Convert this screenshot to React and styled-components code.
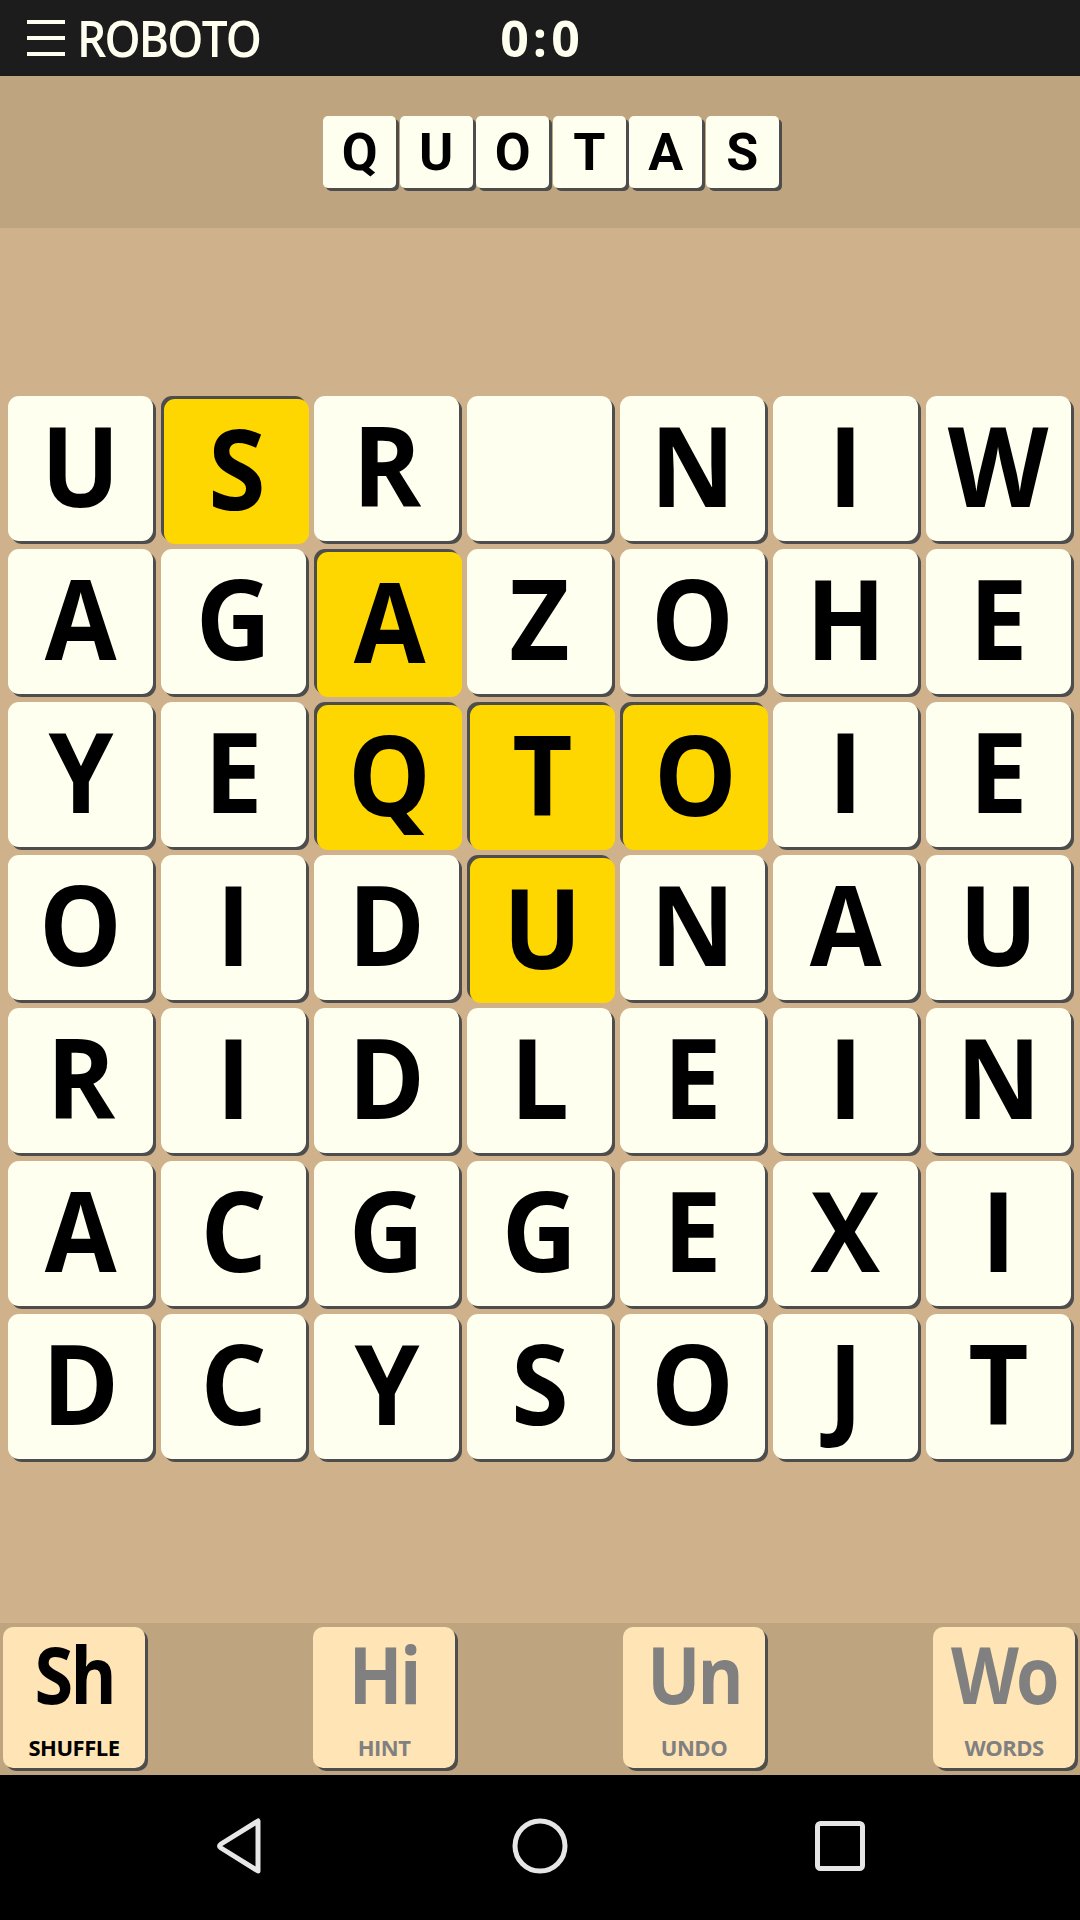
import React from "react";
import styled, { createGlobalStyle } from "styled-components";

const Global = createGlobalStyle`
  html, body { margin: 0; padding: 0; }
  body { width: 1080px; height: 1920px; overflow: hidden; font-family: "Open Sans", "DejaVu Sans", sans-serif; }
  #root { height: 1920px; }
`;

const Screen = styled.div`
  width: 1080px;
  height: 1920px;
  display: flex;
  flex-direction: column;
  background: #cfb28b;
`;

const TopBar = styled.div`
  height: 76px;
  background: #1c1c1c;
  display: grid;
  grid-template-columns: 1fr auto 1fr;
  align-items: center;
  color: #fffff0;
`;

const Brand = styled.div`
  display: flex;
  align-items: center;
  gap: 12px;
  padding-left: 27px;
`;

const Burger = styled.div`
  width: 38px;
  height: 36px;
  display: flex;
  flex-direction: column;
  justify-content: space-between;
  span {
    display: block;
    height: 4px;
    background: #fffff0;
  }
`;

const BrandText = styled.div`
  font-family: "Open Sans", sans-serif;
  font-weight: 600;
  font-size: 51px;
  letter-spacing: -2px;
  line-height: 1;
  transform: translateY(-1px) scaleX(0.9);
  transform-origin: left center;
`;

const Score = styled.div`
  font-family: "Open Sans", sans-serif;
  font-weight: 700;
  font-size: 50px;
  letter-spacing: 4px;
  line-height: 1;
  padding-left: 4px;
`;

const WordBar = styled.div`
  height: 152px;
  background: #bfa480;
  display: flex;
  align-items: center;
  justify-content: center;
  padding-left: 22px;
  gap: 3.5px;
  box-sizing: border-box;
`;

const WordTile = styled.div`
  width: 73px;
  height: 72px;
  background: #fffff0;
  border-radius: 5px;
  box-shadow: 3px 3px 0 #4d4d4d;
  display: flex;
  align-items: center;
  justify-content: center;
  font-family: Roboto, "Liberation Sans", sans-serif;
  font-weight: 700;
  font-size: 52px;
  color: #000;
`;

const Board = styled.div`
  flex: 1;
  display: flex;
  align-items: center;
  padding-left: 8px;
  padding-top: 4px;
`;

const Grid = styled.div`
  display: grid;
  grid-template-columns: repeat(7, 145px);
  grid-auto-rows: 145px;
  gap: 8px;
`;

const Tile = styled.div`
  background: ${(p) => (p.$on ? "#ffd700" : "#fffff0")};
  border-radius: 11px;
  box-shadow: ${(p) => (p.$on ? "-3px -3px 0 #4d4d4d" : "3px 3px 0 #4d4d4d")};
  transform: ${(p) => (p.$on ? "translate(3px, 3px)" : "none")};
  display: flex;
  align-items: center;
  justify-content: center;
  font-family: "Open Sans", sans-serif;
  font-weight: 700;
  font-size: 112px;
  line-height: 1;
  color: #000;
  span {
    display: inline-block;
    transform: translateY(-5px) scaleX(0.93);
  }
`;

const ButtonBar = styled.div`
  height: 152px;
  background: #bfa480;
  display: flex;
  justify-content: space-between;
  align-items: flex-start;
  padding: 4px 5px 0 3px;
  box-sizing: border-box;
`;

const ActionButton = styled.div`
  width: 142px;
  height: 141px;
  background: #ffe4b5;
  border-radius: 10px;
  box-shadow: 3px 3px 0 #4d4d4d;
  display: flex;
  flex-direction: column;
  align-items: center;
  color: ${(p) => (p.$active ? "#000" : "#808080")};
  font-family: "Open Sans", sans-serif;
  font-weight: 700;
`;

const ButtonGlyph = styled.div`
  font-size: 78px;
  line-height: 1;
  margin-top: 8px;
  letter-spacing: -3px;
  transform: scaleX(0.9);
`;

const ButtonLabel = styled.div`
  font-size: 22px;
  line-height: 1;
  margin-top: 23px;
  letter-spacing: -0.5px;
`;

const NavBar = styled.div`
  height: 145px;
  background: #000;
  display: flex;
  align-items: center;
  justify-content: center;
  padding-bottom: 4px;
  box-sizing: border-box;
`;

const NavSlot = styled.div`
  width: 300px;
  display: flex;
  justify-content: center;
`;

const grid = [
  "USR NIW",
  "AGAZOHE",
  "YEQTOIE",
  "OIDUNAU",
  "RIDLEIN",
  "ACGGEXI",
  "DCYSOJT",
];
const on = new Set(["0-1", "1-2", "2-2", "2-3", "2-4", "3-3"]);

const buttons = [
  { g: "Sh", l: "SHUFFLE", a: true },
  { g: "Hi", l: "HINT" },
  { g: "Un", l: "UNDO" },
  { g: "Wo", l: "WORDS" },
];

export default function App() {
  return (
    <>
      <Global />
      <Screen>
        <TopBar>
          <Brand>
            <Burger>
              <span />
              <span />
              <span />
            </Burger>
            <BrandText>ROBOTO</BrandText>
          </Brand>
          <Score>0:0</Score>
          <div />
        </TopBar>
        <WordBar>
          {"QUOTAS".split("").map((c, i) => (
            <WordTile key={i}>{c}</WordTile>
          ))}
        </WordBar>
        <Board>
          <Grid>
            {grid.map((row, r) =>
              row.split("").map((c, col) => (
                <Tile key={`${r}-${col}`} $on={on.has(`${r}-${col}`)}>
                  <span>{c.trim()}</span>
                </Tile>
              ))
            )}
          </Grid>
        </Board>
        <ButtonBar>
          {buttons.map((b) => (
            <ActionButton key={b.l} $active={b.a}>
              <ButtonGlyph>{b.g}</ButtonGlyph>
              <ButtonLabel>{b.l}</ButtonLabel>
            </ActionButton>
          ))}
        </ButtonBar>
        <NavBar>
          <NavSlot>
            <svg width="48" height="58" viewBox="0 0 48 58">
              <path d="M42 4 L42 54 L5 31 Q2 29 5 27 Z" fill="none" stroke="#e6e6e6" strokeWidth="5" strokeLinejoin="round" />
            </svg>
          </NavSlot>
          <NavSlot>
            <svg width="60" height="60" viewBox="0 0 60 60">
              <circle cx="30" cy="30" r="25" fill="none" stroke="#e6e6e6" strokeWidth="5" />
            </svg>
          </NavSlot>
          <NavSlot>
            <svg width="52" height="52" viewBox="0 0 52 52">
              <rect x="3.5" y="3.5" width="45" height="45" rx="3" fill="none" stroke="#e6e6e6" strokeWidth="5" />
            </svg>
          </NavSlot>
        </NavBar>
      </Screen>
    </>
  );
}
